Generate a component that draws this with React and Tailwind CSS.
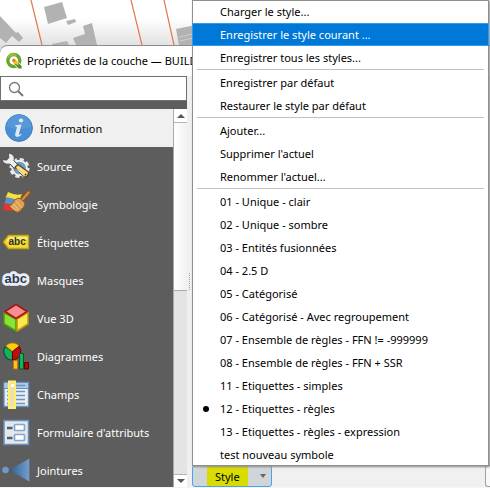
import { useState } from "react"
import clsx from "clsx"

const InfoIcon = () => (
  <svg width="32" height="32" viewBox="0 0 32 32">
    <circle cx="16" cy="16" r="13.4" fill="#4a8fd3" stroke="#3d80c4" strokeWidth="1" />
    <path d="M3.500 15a12.500 12.500 0 0 1 25 0q-12 4-25 0z" fill="#5f9fdc" opacity=".6" />
    <ellipse cx="18" cy="8.500" rx="2.200" ry="2" fill="#dbe9f6" />
    <path d="M12.300 13.200l6.200-.8-2.500 9.400q-.2 1.200.6.900l1.600-1 .6.900q-2.300 2.300-4.700 2.300-2.500-.2-1.900-2.800l1.700-6.500q.2-1.100-.7-1.200l-1.100-.1z" fill="#dbe9f6" />
  </svg>
)

const SourceIcon = () => (
  <svg width="32" height="32" viewBox="0 0 32 32">
    <circle cx="19.500" cy="18" r="8.600" fill="none" stroke="#e9e9e9" strokeWidth="3" strokeDasharray="4 2.750" />
    <circle cx="19.500" cy="18" r="7.300" fill="#6c9bcd" stroke="#ededed" strokeWidth="2" />
    <path d="M10 10.500l7 7" stroke="#303030" strokeWidth="6" />
    <path d="M8.500 3.200q4-.2 5.500 3.500.7 2.300-.2 4l5 5-3.500 3.500-5.300-5.200q-4 1-6.500-1.500-1-1.200-1-3l4 .7 2.300-2.500z" fill="#eeeeee" stroke="#454545" strokeWidth=".8" />
    <path d="M15 17.300l3-2.800 10.300 7.300q.8 4-3.500 5.500z" fill="#f0d475" stroke="#52431c" strokeWidth="1.200" />
    <path d="M18 17l8 7M16.500 19l7.500 6.500" stroke="#fff0a4" strokeWidth="1" />
    <circle cx="25.500" cy="24.500" r=".9" fill="#51411c" />
  </svg>
)

const SymbologyIcon = () => (
  <svg width="32" height="32" viewBox="0 0 32 32">
    <path d="M8 4q8 4 14 2l-4 9L5.500 10z" fill="#f7df3f" />
    <path d="M6.500 9l12 3-2 7-12.500-2z" fill="#5d8fc5" />
    <path d="M4.500 15l13 3 3 6q-7-1-17.700-2z" fill="#e3342d" />
    <path d="M28.500 4.500L22 12" stroke="#8b531b" strokeWidth="4.200" strokeLinecap="round" />
    <path d="M28.500 4.500L22 12" stroke="#d98a35" strokeWidth="2.400" strokeLinecap="round" />
    <path d="M14.500 12.500q3-3.500 6-1.800l4 3.800q1.500 3-2 5.500-1.500 3-5 4.500Q12 22.500 9 18q3.500-1.500 5.500-5.500z" fill="#dda052" stroke="#8c5a25" strokeWidth="1" />
    <path d="M15.500 12.500l7 7.500M13.500 16l5 6M11.500 18l5 5" stroke="#f3c98a" strokeWidth="1" />
  </svg>
)

const LabelsIcon = () => (
  <svg width="32" height="32" viewBox="0 0 32 32">
    <path d="M3.500 16L8.500 9.500h20v13h-20z" fill="#f4d930" stroke="#c5a414" strokeWidth="1.300" strokeLinejoin="round" />
    <path d="M5.500 15.500l3.700-4.700H27.500v3z" fill="#fbef8c" opacity=".7" />
    <text x="8.500" y="18.800" fontFamily="Liberation Sans, sans-serif" fontSize="10" fontWeight="700" fill="#303030">abc</text>
  </svg>
)

const MasksIcon = () => (
  <svg width="32" height="32" viewBox="0 0 32 32">
    <text x="4.500" y="19" fontFamily="Liberation Sans, sans-serif" fontSize="13" fontWeight="700" fill="#333b46" stroke="#e7effc" strokeWidth="5.500" strokeLinejoin="round" paintOrder="stroke">abc</text>
  </svg>
)

const CubeIcon = () => (
  <svg width="32" height="32" viewBox="0 0 32 32" strokeLinejoin="round" strokeWidth="1.500">
    <path d="M4 10.500L16 17v12L4 22z" fill="#8ae234" stroke="#4b9a0d" />
    <path d="M28 10.500L17 17v12l11-7z" fill="#fce94f" stroke="#bd9b06" />
    <path d="M16 2.500l11 7-11 7-11-7z" fill="#f78f8f" stroke="#a8151a" />
  </svg>
)

const DiagramIcon = () => (
  <svg width="32" height="32" viewBox="0 0 32 32">
    <path d="M12.500 11.500V20A8.500 8.500 0 0 1 5.500 6.500z" fill="#16b15b" stroke="#07542c" strokeWidth="1.200" />
    <path d="M12.500 11.500L5.800 6.200a8.500 8.500 0 0 1 13.400 0z" fill="#fcce0d" stroke="#a27e05" strokeWidth=".8" />
    <path d="M12.500 11.500l6.800-5.300Q22 10 20 15.500q-2.500 4.200-7.500 4.500z" fill="#bd0d0d" stroke="#600" strokeWidth="1" />
    <path d="M13.500 20.500h4v8.500h-4z" fill="#fcc414" stroke="#ba7908" />
    <path d="M19.500 13.500h4V29h-4z" fill="#16b15b" stroke="#07542c" />
    <path d="M24.500 22.500h4V29h-4z" fill="#ae0909" stroke="#5d0000" />
  </svg>
)

const FieldsIcon = () => (
  <svg width="32" height="32" viewBox="0 0 32 32">
    <path d="M4 4.500h24.500v24H4z" fill="#e9eef4" stroke="#6691be" strokeWidth="1.300" />
    <path d="M4.500 5h23.500v5H4.500z" fill="#a9cbe9" />
    <path d="M4 10.500h24.500" stroke="#6691be" />
    <path d="M16 7.500h9M7 13.500h18M7 17.500h18M7 21.500h18M7 25.500h18" stroke="#6f94bb" strokeWidth="1.300" />
    <path d="M9 3.500h6V30H9z" fill="#eddfae" stroke="#fff269" strokeWidth="2" />
    <path d="M11 6h3v3h-3z" fill="#fff" />
  </svg>
)

const FormIcon = () => (
  <svg width="32" height="32" viewBox="0 0 32 32">
    <path d="M4 4.500h24.500v24H4z" fill="#e7e7e7" stroke="#6590c1" strokeWidth="1.500" />
    <rect x="14.500" y="8.500" width="10" height="6" rx="1" fill="#fff" stroke="#80a8d3" strokeWidth="1.700" />
    <rect x="14.500" y="18.500" width="10" height="6" rx="1" fill="#fff" stroke="#80a8d3" strokeWidth="1.700" />
    <path d="M7 12h5.500M7 22h5.500" stroke="#44607f" strokeWidth="2.400" />
  </svg>
)

const JoinIcon = () => (
  <svg width="32" height="32" viewBox="0 0 32 32">
    <defs>
      <linearGradient id="join">
        <stop offset="0" stopColor="#2f5d8f" />
        <stop offset="1" stopColor="#729fcf" />
      </linearGradient>
    </defs>
    <circle cx="5.500" cy="16" r="3.300" fill="#6c99c9" />
    <path d="M9.500 16L29.300 4.500v23z" fill="url(#join)" />
  </svg>
)

const QgisIcon = () => (
  <svg width="18" height="18" viewBox="0 0 18 18" className="shrink-0">
    <circle cx="8.800" cy="8.500" r="6" fill="none" stroke="#67a52d" strokeWidth="3.400" />
    <path d="M3 5.500Q6 1 11.500 3" fill="none" stroke="#93c13e" strokeWidth="2.200" />
    <path d="M9 9h3l5 5v3h-3.200L9 12z" fill="#4e9228" stroke="#fff" strokeWidth=".8" />
    <path d="M8 8h3l2.300 2.300v3L8 10.800z" fill="#f2c230" />
    <path d="M7.300 6.800h3v3h-3z" fill="#ee7913" />
  </svg>
)

const tabs = [
  { name: "Information", icon: InfoIcon },
  { name: "Source", icon: SourceIcon },
  { name: "Symbologie", icon: SymbologyIcon },
  { name: "Étiquettes", icon: LabelsIcon },
  { name: "Masques", icon: MasksIcon },
  { name: "Vue 3D", icon: CubeIcon },
  { name: "Diagrammes", icon: DiagramIcon },
  { name: "Champs", icon: FieldsIcon },
  { name: "Formulaire d'attributs", icon: FormIcon },
  { name: "Jointures", icon: JoinIcon },
]

const menuGroups = [
  ["Charger le style...", "Enregistrer le style courant ...", "Enregistrer tous les styles..."],
  ["Enregistrer par défaut", "Restaurer le style par défaut"],
  ["Ajouter...", "Supprimer l'actuel", "Renommer l'actuel..."],
  [
    "01 - Unique - clair",
    "02 - Unique - sombre",
    "03 - Entités fusionnées",
    "04 - 2.5 D",
    "05 - Catégorisé",
    "06 - Catégorisé - Avec regroupement",
    "07 - Ensemble de règles - FFN != -999999",
    "08 - Ensemble de règles - FFN + SSR",
    "11 - Etiquettes - simples",
    "12 - Etiquettes - règles",
    "13 - Etiquettes - règles - expression",
    "test nouveau symbole",
  ],
]

function MapStrip() {
  return (
    <div className="h-[45px] overflow-hidden bg-linear-to-b from-white from-40% to-[#e2e2e2]">
      <svg width="490" height="45" viewBox="0 0 490 45">
        <g fill="#b2b2b2">
          <path d="M0 16l16 17 2-1 5 6-4 4-7-6-6 7-6-5z" />
          <path d="M44 7l18-5 5 16-19 6z" />
          <path d="M66 21l9-2 1 3-8 3z" />
          <path d="M83 26l9-3 5 22H76l-3-7 12-4z" />
          <path d="M52 44l15-3 2 4H52z" />
          <path d="M176 29l20-4v20h-17z" />
        </g>
        <path d="M179 37l14-3M180 41l13-3" stroke="#cfcfcf" />
        <path d="M31 0l11 45M131 0l11 45M164 0l10 45" stroke="#e4764f" strokeWidth="1.200" />
      </svg>
    </div>
  )
}

function TabList({ current, onSelect }) {
  return (
    <div className="flex h-[378px]">
      <ul className="flex-1 overflow-hidden">
        {tabs.map(({ name, icon: Icon }) => (
          <li key={name}>
            <button
              onClick={() => onSelect(name)}
              className={clsx(
                "flex h-[38px] w-full items-center gap-[5px] whitespace-nowrap text-left",
                name === current ? "bg-[#f0f0f0] pl-[3px] text-black" : "text-white"
              )}
            >
              <Icon />
              <span className="pt-[2px]">{name}</span>
            </button>
          </li>
        ))}
      </ul>
      <div className="flex w-[14px] flex-col border-l border-[#a9a9a9] bg-[#e4e4e4]">
        <div className="flex h-[14px] items-center justify-center border-b border-[#b5b5b5] bg-white">
          <svg width="8" height="4"><path d="M0 4l4-4 4 4z" fill="#555" /></svg>
        </div>
        <div className="h-[168px] border-b border-[#a9a9a9] bg-linear-to-r from-white to-[#f1f1f1]" />
        <div className="mt-auto flex h-[13px] items-center justify-center border-t border-[#b5b5b5] bg-white">
          <svg width="8" height="4"><path d="M0 0h8l-4 4z" fill="#555" /></svg>
        </div>
      </div>
    </div>
  )
}

function StyleMenu({ active, onSelect }) {
  return (
    <div
      role="menu"
      className="absolute top-0 right-px left-[192px] bg-white shadow-[1px_1px_2px_#888] outline outline-[#8f8f8f] -outline-offset-1"
    >
      {menuGroups.map((group, i) => (
        <div key={i} className={clsx(i > 0 && "relative pt-[2px]")}>
          {i > 0 && <div className="absolute inset-x-[5px] top-0 h-px bg-[#c2c2c2]" />}
          {group.map((item) => (
            <button
              key={item}
              role="menuitem"
              onClick={() => onSelect(item)}
              className={clsx(
                "flex h-[23px] w-full items-center whitespace-nowrap text-left",
                item === "Enregistrer le style courant ..." && "relative z-10 bg-[#0078d7] text-white outline outline-[#2f9bee] -outline-offset-1"
              )}
            >
              <span className="flex w-7 justify-center">
                {item === active && <span className="size-[6px] rounded-full bg-black" />}
              </span>
              {item}
            </button>
          ))}
        </div>
      ))}
    </div>
  )
}

export default function App() {
  const [tab, setTab] = useState("Information")
  const [style, setStyle] = useState("12 - Etiquettes - règles")

  return (
    <div className="relative overflow-hidden bg-[#dcdcdc] font-['Noto_Sans',sans-serif] text-[11px] leading-4 text-black">
      <MapStrip />
      <div className="rounded-tl-lg border-t border-[#8c8c8c] bg-white">
        <div className="flex h-[30px] items-center gap-1 pl-[5px] whitespace-nowrap">
          <QgisIcon />
          <h1>Propriétés de la couche — BUILDING</h1>
        </div>
        <div className="flex">
          <div className="w-[187px] bg-[#5d5d5d]">
            <label className="mb-2 flex h-[25px] items-center border border-[#707070] bg-white pl-[7px]">
              <svg width="16" height="16" fill="none" stroke="#777" className="shrink-0">
                <circle cx="6.500" cy="6.500" r="5" strokeWidth="1.300" />
                <path d="M10 10l5 5" strokeWidth="2" />
              </svg>
              <input type="search" aria-label="Rechercher" className="w-full min-w-0 px-1 outline-none" />
            </label>
            <TabList current={tab} onSelect={setTab} />
          </div>
          <div className="flex w-[5px] items-center justify-center bg-[#f0f0f0]">
            <div className="h-[17px] border-l border-dotted border-[#aaa]" />
          </div>
          <div className="flex flex-1 items-end justify-between bg-[#f0f0f0]">
            <button className="flex h-[22px] w-20 items-center rounded-[3px] border border-[#4aa3e8] bg-[#d0d5da]">
              <span className="ml-[14px] h-full bg-[#d8dc00] px-2 pt-[3px]">Style</span>
              <svg width="6" height="4" className="ml-auto mr-[5px]"><path d="M0 0h6l-3 4z" fill="#666" /></svg>
            </button>
            <button aria-label="OK" className="h-[22px] w-[5px] rounded-l-[3px] border border-r-0 border-[#a0a0a0] bg-[#f8f8f8]" />
          </div>
        </div>
        <div className="h-px bg-[#f4f4f4]" />
      </div>
      <StyleMenu active={style} onSelect={setStyle} />
    </div>
  )
}
